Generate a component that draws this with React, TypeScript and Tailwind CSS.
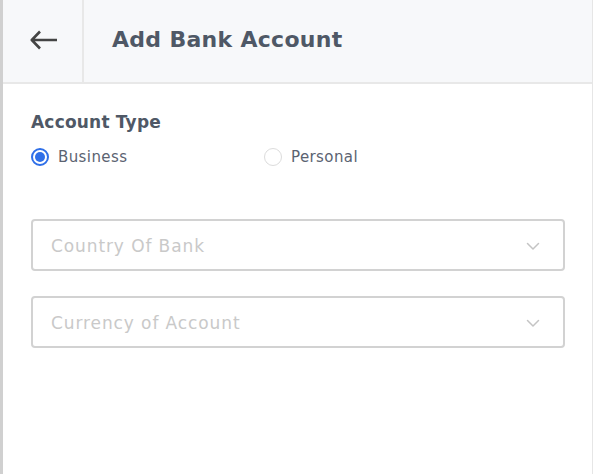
import { useState } from 'react';

const font = { fontFamily: '"DejaVu Sans", "Open Sans", sans-serif' };

function Chevron() {
  return (
    <svg width="14" height="9" viewBox="0 0 14 9" fill="none">
      <path d="M1.5 1.5 7 7l5.5-5.5" stroke="#c4c4c4" strokeWidth="1.5" strokeLinecap="round" strokeLinejoin="round" />
    </svg>
  );
}

function SelectBox({ placeholder }: { placeholder: string }) {
  return (
    <div className="flex h-[52px] items-center justify-between rounded-[4px] border-2 border-[#d2d2d2] pl-[18px] pr-[23px] pt-[3px]">
      <span className="text-[17px] tracking-[0.9px] text-[#c9c9c9]">{placeholder}</span>
      <Chevron />
    </div>
  );
}

function Radio({ label, checked, onClick }: { label: string; checked: boolean; onClick: () => void }) {
  return (
    <button type="button" onClick={onClick} className="flex items-center gap-[9px]">
      <span
        className={
          checked
            ? 'flex h-[18px] w-[18px] items-center justify-center rounded-full border-2 border-[#2f6fe8]'
            : 'flex h-[18px] w-[18px] items-center justify-center rounded-full border border-[#dcdcdc]'
        }
      >
        {checked && <span className="h-[10px] w-[10px] rounded-full bg-[#2f6fe8]" />}
      </span>
      <span className="text-[15px] tracking-[0.4px] text-[#5b6371]">{label}</span>
    </button>
  );
}

export default function App() {
  const [type, setType] = useState<'business' | 'personal'>('business');

  return (
    <div className="h-[474px] w-[594px] bg-white" style={font}>
      <div className="flex h-full w-[593px] flex-col border-l-[3px] border-r border-l-[#d0d0d0] border-r-[#e6e6e6]">
        <header className="flex h-[84px] border-b-2 border-[#e8e8e8] bg-[#f7f8fa]">
          <button type="button" className="flex h-full w-[81px] items-center justify-center border-r-2 border-[#e8e8e8] pb-[2px] pl-[3px]">
            <svg width="28" height="20" viewBox="0 0 28 20" fill="none">
              <path d="M27 10H2M10 1.5 1.8 10l8.2 8.5" stroke="#444" strokeWidth="2.6" strokeLinejoin="round" />
            </svg>
          </button>
          <h1 className="flex items-center pb-[3px] pl-[28px] text-[22px] font-semibold tracking-[0.3px] text-[#4f5866]">
            Add Bank Account
          </h1>
        </header>

        <main className="pl-[28px] pr-[27px] pt-[26px]">
          <h2 className="text-[17px] font-semibold tracking-[0.2px] text-[#4f5866]">Account Type</h2>
          <div className="mt-[10px] flex items-center">
            <div className="w-[233px]">
              <Radio label="Business" checked={type === 'business'} onClick={() => setType('business')} />
            </div>
            <Radio label="Personal" checked={type === 'personal'} onClick={() => setType('personal')} />
          </div>

          <div className="mt-[51px] flex flex-col gap-[25px]">
            <SelectBox placeholder="Country Of Bank" />
            <SelectBox placeholder="Currency of Account" />
          </div>
        </main>
      </div>
    </div>
  );
}
